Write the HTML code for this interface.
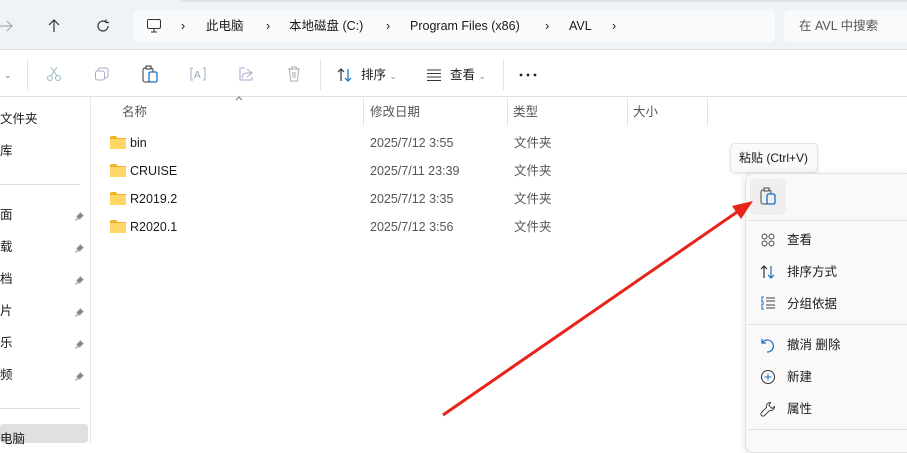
<!DOCTYPE html><html><head><meta charset="utf-8"><style>
*{margin:0;padding:0;box-sizing:border-box}
body{width:907px;height:443px;overflow:hidden;background:#fff;font-family:"Liberation Sans","Noto Sans CJK SC",sans-serif;font-size:12.5px;line-height:16px;color:#1a1a1a;position:relative}
.a{position:absolute;white-space:nowrap;line-height:16px}
.g{color:#555}
</style></head><body>
<div class="a" style="left:0;top:0;width:907px;height:50px;background:#eef3f8;border-bottom:1px solid #d8dde3"></div>
<div class="a" style="left:180px;top:0;width:727px;height:2px;background:#dfe5ec"></div>
<div class="a" style="left:133px;top:10px;width:642px;height:32px;background:#f8fafc;border-radius:5px"></div>
<div class="a" style="left:784px;top:10px;width:130px;height:32px;background:#f8fafc;border-radius:5px"></div>
<svg class="a" style="left:0;top:19px" width="14" height="14" fill="none" stroke="#aaa" stroke-width="1.2"><path d="M0 7h12M7 2l5 5-5 5"/></svg>
<svg class="a" style="left:47px;top:19px" width="14" height="14" fill="none" stroke="#333" stroke-width="1.2"><path d="M7 13V1M2 6l5-5 5 5"/></svg>
<svg class="a" style="left:96px;top:19px" width="14" height="14" fill="none" stroke="#333" stroke-width="1.2"><path d="M12 7A5 5 0 1 1 10 3M10 0.5V3.5H13"/></svg>
<svg class="a" style="left:146px;top:18px" width="16" height="16"><rect x="1.5" y="1.5" width="13" height="9" rx="1.5" fill="none" stroke="#333"/><path d="M5 14h6M8 11v3" stroke="#333"/></svg>
<div class="a" style="left:181px;top:18px">›</div>
<div class="a" style="left:206px;top:18px">此电脑</div>
<div class="a" style="left:266px;top:18px">›</div>
<div class="a" style="left:289px;top:18px">本地磁盘 (C:)</div>
<div class="a" style="left:386px;top:18px">›</div>
<div class="a" style="left:410px;top:18px">Program Files (x86)</div>
<div class="a" style="left:545px;top:18px">›</div>
<div class="a" style="left:569px;top:18px">AVL</div>
<div class="a" style="left:612px;top:18px">›</div>
<div class="a g" style="left:799px;top:18px">在 AVL 中搜索</div>
<div class="a" style="left:0;top:96px;width:907px;height:1px;background:#dcdfe3"></div>
<div class="a" style="left:4px;top:67px;font-size:9px;color:#777">⌄</div>
<div class="a" style="left:27px;top:60px;width:1px;height:30px;background:#e3e3e3"></div>
<svg class="a" style="left:46px;top:66px" width="16" height="16" fill="none" stroke="#9bb"><circle cx="4" cy="12" r="2.5"/><circle cx="12" cy="12" r="2.5"/><path d="M5 10L11 1M11 10L5 1"/></svg>
<svg class="a" style="left:94px;top:66px" width="16" height="16"><rect x="4" y="2" width="10" height="10" rx="2" fill="none" stroke="#aac"/><rect x="1.5" y="5" width="9" height="9" rx="2" fill="#fff" stroke="#aac"/></svg>
<svg class="a" style="left:141px;top:65px" width="18" height="19"><rect x="2" y="3" width="10" height="14" rx="2" fill="none" stroke="#333"/><rect x="5" y="1" width="5" height="3" fill="#fff" stroke="#333"/><rect x="8" y="7" width="8" height="10" rx="1.5" fill="#fff" stroke="#1a6fc0" stroke-width="1.3"/></svg>
<svg class="a" style="left:189px;top:66px" width="18" height="16"><path d="M4 2H2v12h2M14 2h2v12h-2" fill="none" stroke="#aac"/><text x="5" y="12" font-size="10" fill="#8ab" font-family="Liberation Sans">A</text></svg>
<svg class="a" style="left:238px;top:66px" width="16" height="16" fill="none" stroke="#aac"><path d="M9 3l5 4-5 4M14 7H9Q4 7 4 12"/><path d="M7 2H2v12h12v-3"/></svg>
<svg class="a" style="left:286px;top:66px" width="16" height="16"><path d="M2 3h12M5 3l1-2h4l1 2M3.5 3l1 12h7l1-12M7 6v6M9 6v6" fill="none" stroke="#aaa"/></svg>
<div class="a" style="left:320px;top:60px;width:1px;height:30px;background:#e3e3e3"></div>
<svg class="a" style="left:337px;top:68px" width="16" height="14" fill="none" stroke-width="1.2"><path d="M4 13V1M1 4l3-3 3 3" stroke="#333"/><path d="M11 1v12M8 10l3 3 3-3" stroke="#1a6fc0"/></svg>
<div class="a" style="left:361px;top:67px">排序 <span style="font-size:9px;color:#888">⌄</span></div>
<svg class="a" style="left:426px;top:68px" width="16" height="14" stroke="#333"><path d="M1 2h14M1 5.5h14M1 9h14M1 12.5h14"/></svg>
<div class="a" style="left:450px;top:67px">查看 <span style="font-size:9px;color:#888">⌄</span></div>
<div class="a" style="left:503px;top:60px;width:1px;height:30px;background:#e3e3e3"></div>
<svg class="a" style="left:519px;top:73px" width="18" height="4" fill="#222"><circle cx="2" cy="2" r="1.4"/><circle cx="9" cy="2" r="1.4"/><circle cx="16" cy="2" r="1.4"/></svg>
<div class="a" style="left:90px;top:97px;width:1px;height:346px;background:#e8e8e8"></div>
<div class="a" style="left:0;top:111px">文件夹</div>
<div class="a" style="left:0;top:143px">库</div>
<div class="a" style="left:0;top:184px;width:80px;height:1px;background:#ddd"></div>
<div class="a" style="left:0;top:207px">面</div><div class="a" style="left:0;top:239px">载</div><div class="a" style="left:0;top:271px">档</div><div class="a" style="left:0;top:303px">片</div><div class="a" style="left:0;top:335px">乐</div><div class="a" style="left:0;top:367px">频</div>
<svg width="0" height="0"><defs><symbol id="p" viewBox="0 0 10 10"><path d="M5 1l4 4-1.5 0.5-2 2L5 9 1 5l1.5-0.5 2-2z" fill="#888"/><path d="M3 7L0.5 9.5" stroke="#888"/></symbol><symbol id="f" viewBox="0 0 16 13"><path d="M0 1.5Q0 0 1.5 0H6l1.5 2H16v11H0z" fill="#f0b429"/><rect x="0" y="3" width="16" height="10" rx="1" fill="#ffd666"/></symbol></defs></svg>
<svg class="a" style="left:75px;top:211px" width="10" height="10"><use href="#p"/></svg>
<svg class="a" style="left:75px;top:243px" width="10" height="10"><use href="#p"/></svg>
<svg class="a" style="left:75px;top:275px" width="10" height="10"><use href="#p"/></svg>
<svg class="a" style="left:75px;top:307px" width="10" height="10"><use href="#p"/></svg>
<svg class="a" style="left:75px;top:339px" width="10" height="10"><use href="#p"/></svg>
<svg class="a" style="left:75px;top:371px" width="10" height="10"><use href="#p"/></svg>
<div class="a" style="left:0;top:408px;width:80px;height:1px;background:#ddd"></div>
<div class="a" style="left:0;top:424px;width:88px;height:19px;background:#e0e0e0;border-radius:4px"></div>
<div class="a" style="left:0;top:431px">电脑</div>
<svg class="a" style="left:235px;top:96px" width="8" height="5" fill="none" stroke="#777"><path d="M1 4l3-3 3 3"/></svg>
<div class="a g" style="left:122px;top:104px">名称</div>
<div class="a g" style="left:370px;top:104px">修改日期</div>
<div class="a g" style="left:513px;top:104px">类型</div>
<div class="a g" style="left:633px;top:104px">大小</div>
<div class="a" style="left:363px;top:98px;width:1px;height:28px;background:#e3e3e3"></div>
<div class="a" style="left:507px;top:98px;width:1px;height:28px;background:#e3e3e3"></div>
<div class="a" style="left:627px;top:98px;width:1px;height:28px;background:#e3e3e3"></div>
<div class="a" style="left:707px;top:98px;width:1px;height:28px;background:#e3e3e3"></div>
<svg class="a" style="left:110px;top:136px" width="16" height="13"><use href="#f"/></svg>
<svg class="a" style="left:110px;top:164px" width="16" height="13"><use href="#f"/></svg>
<svg class="a" style="left:110px;top:192px" width="16" height="13"><use href="#f"/></svg>
<svg class="a" style="left:110px;top:220px" width="16" height="13"><use href="#f"/></svg>
<div class="a" style="left:130px;top:135px">bin</div><div class="a g" style="left:370px;top:135px">2025/7/12 3:55</div><div class="a g" style="left:514px;top:135px">文件夹</div>
<div class="a" style="left:130px;top:163px">CRUISE</div><div class="a g" style="left:370px;top:163px">2025/7/11 23:39</div><div class="a g" style="left:514px;top:163px">文件夹</div>
<div class="a" style="left:130px;top:191px">R2019.2</div><div class="a g" style="left:370px;top:191px">2025/7/12 3:35</div><div class="a g" style="left:514px;top:191px">文件夹</div>
<div class="a" style="left:130px;top:219px">R2020.1</div><div class="a g" style="left:370px;top:219px">2025/7/12 3:56</div><div class="a g" style="left:514px;top:219px">文件夹</div>
<div class="a" style="left:730px;top:143px;width:88px;height:30px;background:#f9f9f9;border:1px solid #e3e3e3;border-radius:5px;box-shadow:0 1px 3px rgba(0,0,0,.1)"></div>
<div class="a" style="left:739px;top:150px;font-size:12px">粘贴 (Ctrl+V)</div>
<div class="a" style="left:745px;top:173px;width:170px;height:280px;background:#f9f9f9;border:1px solid #e3e3e3;border-radius:8px;box-shadow:0 2px 8px rgba(0,0,0,.12)"></div>
<div class="a" style="left:750px;top:179px;width:36px;height:36px;background:#efefef;border-radius:4px"></div>
<svg class="a" style="left:759px;top:187px" width="18" height="19"><rect x="2" y="3" width="10" height="14" rx="2" fill="none" stroke="#444"/><rect x="5" y="1" width="5" height="3" fill="#efefef" stroke="#444"/><rect x="8" y="7" width="8" height="10" rx="1.5" fill="#efefef" stroke="#1a6fc0" stroke-width="1.3"/></svg>
<div class="a" style="left:748px;top:220px;width:160px;height:1px;background:#e0e0e0"></div>
<div class="a" style="left:748px;top:324px;width:160px;height:1px;background:#e0e0e0"></div>
<div class="a" style="left:748px;top:429px;width:160px;height:1px;background:#e0e0e0"></div>
<svg class="a" style="left:761px;top:233px" width="14" height="14" fill="none" stroke="#444"><circle cx="3.5" cy="3.5" r="2.5"/><circle cx="10.5" cy="3.5" r="2.5"/><circle cx="3.5" cy="10.5" r="2.5"/><circle cx="10.5" cy="10.5" r="2.5"/></svg>
<svg class="a" style="left:760px;top:265px" width="16" height="14" fill="none" stroke-width="1.2"><path d="M4 13V1M1 4l3-3 3 3" stroke="#333"/><path d="M11 1v12M8 10l3 3 3-3" stroke="#1a6fc0"/></svg>
<svg class="a" style="left:761px;top:296px" width="14" height="14" fill="none"><path d="M3 1H1v5h2M3 8H1v5h2" stroke="#1a6fc0"/><path d="M5 2h9M5 5h9M5 9h9M5 12h9" stroke="#444"/></svg>
<svg class="a" style="left:761px;top:337px" width="14" height="16" fill="none" stroke="#1a6fc0" stroke-width="1.2"><path d="M1 2v4h4M1.5 5.5A6 6 0 1 1 6 15"/></svg>
<svg class="a" style="left:760px;top:369px" width="16" height="16" fill="none" stroke="#333"><circle cx="8" cy="8" r="6.5"/><path d="M8 4.5v7M4.5 8h7" stroke="#1a6fc0"/></svg>
<svg class="a" style="left:760px;top:401px" width="16" height="16" fill="none" stroke="#444"><path d="M10.5 1.5a4 4 0 0 0-4 5L1.5 11.5a1.5 1.5 0 0 0 3 3L9.5 9.5a4 4 0 0 0 5-4l-2.5 2-3-3z"/></svg>
<div class="a" style="left:787px;top:232px">查看</div>
<div class="a" style="left:787px;top:264px">排序方式</div>
<div class="a" style="left:787px;top:296px">分组依据</div>
<div class="a" style="left:787px;top:337px">撤消 删除</div>
<div class="a" style="left:787px;top:369px">新建</div>
<div class="a" style="left:787px;top:401px">属性</div>
<svg class="a" style="left:0;top:0" width="907" height="443"><path d="M443 415L740 210" stroke="#e8231a" stroke-width="3"/><path d="M753 201L732 206L741 219z" fill="#e8231a"/></svg>
</body></html>
